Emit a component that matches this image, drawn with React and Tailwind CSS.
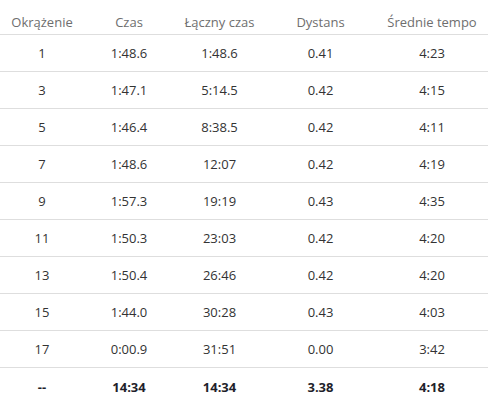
import React from "react";

const rows = [
  ["1", "1:48.6", "1:48.6", "0.41", "4:23"],
  ["3", "1:47.1", "5:14.5", "0.42", "4:15"],
  ["5", "1:46.4", "8:38.5", "0.42", "4:11"],
  ["7", "1:48.6", "12:07", "0.42", "4:19"],
  ["9", "1:57.3", "19:19", "0.43", "4:35"],
  ["11", "1:50.3", "23:03", "0.42", "4:20"],
  ["13", "1:50.4", "26:46", "0.42", "4:20"],
  ["15", "1:44.0", "30:28", "0.43", "4:03"],
  ["17", "0:00.9", "31:51", "0.00", "3:42"],
];

const total = ["--", "14:34", "14:34", "3.38", "4:18"];
const headers = ["Okrążenie", "Czas", "Łączny czas", "Dystans", "Średnie tempo"];

const grid = "grid grid-cols-[84px_90px_91px_111px_112px]";

export default function App() {
  return (
    <div
      className="w-[488px] h-[401px] overflow-hidden bg-white text-[13px]"
      style={{ fontFamily: '"Open Sans", "Noto Sans", sans-serif' }}
    >
      <div className={`${grid} h-[35px] border-b border-[#dedede] text-[#6e6e6e] items-end pb-[3px]`}>
        {headers.map((h) => (
          <div key={h} className="text-center leading-[18px]">{h}</div>
        ))}
      </div>
      {rows.map((r, i) => (
        <div key={i} className={`${grid} h-[37px] border-b border-[#dedede] text-[#333333] items-center`}>
          {r.map((c, j) => (
            <div key={j} className="text-center leading-[18px]">{c}</div>
          ))}
        </div>
      ))}
      <div className={`${grid} h-[37px] text-[#1f1f2b] font-bold items-center`}>
        {total.map((c, j) => (
          <div key={j} className="text-center leading-[18px]">{c}</div>
        ))}
      </div>
    </div>
  );
}
